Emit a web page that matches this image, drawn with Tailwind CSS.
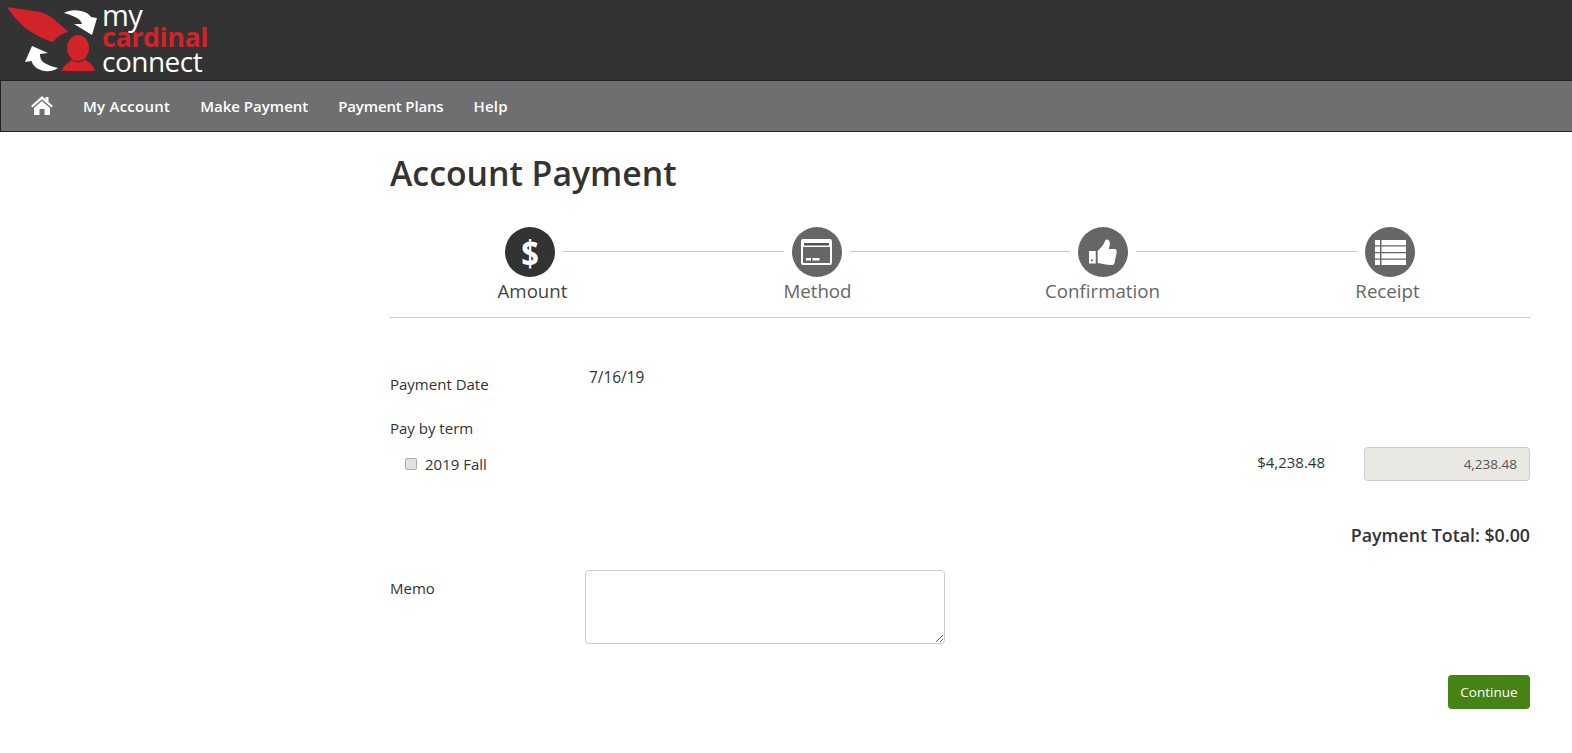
<!DOCTYPE html>
<html lang="en">
<head>
    <meta charset="UTF-8">
    <title>Account Payment</title>
    <script src="https://cdn.jsdelivr.net/npm/@tailwindcss/browser@4"></script>
</head>
<body class="bg-white text-[#333] font-['Open_Sans',sans-serif] text-[15px]">
    <!-- Logo bar -->
    <header class="h-[80px] bg-[#333] flex items-start">
        <svg class="w-[102px] h-[80px] shrink-0" viewBox="0 0 102 80">
            <path d="M7 7 L40 12 C47 14 53 18 57 22 C61 25 65 29 68 32 C61 34 56 38 53 42 C46 40 39 37 33 33 C27 30 23 26 20 23 C15 18 11 13 7 7Z" fill="#d2232a"/>
            <ellipse cx="78" cy="48" rx="11" ry="13" fill="#d2232a"/>
            <path d="M62 71 C63 66 68 63 72 59.500 C76 63 81 63 85 59.500 C90 63 94 66 95 71Z" fill="#d2232a"/>
            <path d="M64 13 C69 10 75 9.500 81 11 C86 12 89 14 91 17 L97 18 L92 35 L74 24 L82 24 C81 21 79 19 77 18 C73 16 69 14 64 13Z" fill="#fff"/>
            <path d="M58 68 C53 71.500 47 72 42 70.500 C37 69 33 66 31.500 61 L25 62 L32 46 L48 53 L40 54 C40 58 41 60 43 62 C47 65 53 67 58 68Z" fill="#fff"/>
        </svg>
        <div class="flex flex-col pt-[5px] text-[#fff]">
            <span class="text-[29px] leading-[20px] h-[20px] tracking-[-0.5px]">my</span>
            <span class="text-[27px] leading-[24px] h-[24px] font-bold tracking-[-0.5px] text-[#d2232a]">cardinal</span>
            <span class="text-[28px] leading-[24px] tracking-[-0.5px]">connect</span>
        </div>
    </header>

    <!-- Nav -->
    <nav class="h-[52px] bg-[#6f6f71] border border-r-0 border-[#222] flex items-center text-white font-semibold text-[15px] pl-[30px]">
        <svg class="w-[22px] h-[19px] mr-[30px] mb-[2px]" viewBox="0 0 22 19" fill="#fff">
            <path d="M11 0 L14.500 3.200 V1 H17.500 V6 L22 10 L20.500 11.600 L11 3.200 L1.500 11.600 L0 10Z"/>
            <path d="M11 5 L19 12 V19 H13.500 V13 H8.500 V19 H3 V12Z"/>
        </svg>
        <a class="mr-[30px] tracking-[0.25px]">My Account</a>
        <a class="mr-[30px]">Make Payment</a>
        <a class="mr-[30px] tracking-[-0.15px]">Payment Plans</a>
        <a class="tracking-[0.2px]">Help</a>
    </nav>

    <main class="ml-[390px] w-[1140px]">
        <h1 class="text-[33.800px] leading-[44px] font-semibold mt-[19px]">Account Payment</h1>

        <!-- Stepper -->
        <div class="flex items-center h-[50px] mt-[32px] px-[115px]">
            <div class="w-[50px] h-[50px] rounded-full bg-[#333] flex items-center justify-center text-white font-bold text-[35px] leading-none shrink-0">
                <span class="scale-x-[0.88]">$</span>
            </div>
            <div class="flex-1 h-px bg-[#c8c8c8] mx-[8px] mb-[1px]"></div>
            <div class="w-[50px] h-[50px] rounded-full bg-[#666] flex items-center justify-center shrink-0">
                <svg class="w-[31px] h-[26px]" viewBox="0 0 31 26" fill="none">
                    <rect x="1" y="1" width="29" height="24" rx="1" stroke="#fff" stroke-width="2"/>
                    <rect x="2" y="2" width="27" height="6" fill="#fff"/>
                    <rect x="3" y="4" width="25" height="2.500" fill="#555"/>
                    <rect x="5" y="19" width="5" height="2.500" fill="#fff"/>
                    <rect x="11.500" y="19" width="7" height="2.500" fill="#fff"/>
                </svg>
            </div>
            <div class="flex-1 h-px bg-[#c8c8c8] mx-[8px] mb-[1px]"></div>
            <div class="w-[50px] h-[50px] rounded-full bg-[#666] flex items-center justify-center shrink-0">
                <svg class="w-[28px] h-[27px]" viewBox="0 0 29 27" fill="#fff">
                    <path d="M0 12 H7 V25 H0Z M3 20.500 a1 1 0 1 0 .01 0Z" fill-rule="evenodd"/>
                    <path d="M9 12 C12 9 15 6 16 3 C16.500 1 17 0 18.500 0 C21 0 22 3 21.500 6 L20.500 10 H26.500 C28.500 10 29 12 28.500 14 L26.500 24 C26 26 24.500 26.500 23 26.500 C18 26.500 13 25 9 24.500Z"/>
                </svg>
            </div>
            <div class="flex-1 h-px bg-[#c8c8c8] mx-[8px] mb-[1px]"></div>
            <div class="w-[50px] h-[50px] rounded-full bg-[#666] flex items-center justify-center shrink-0">
                <svg class="w-[31px] h-[25px]" viewBox="0 0 31 25" fill="#fff">
                    <path d="M0 0 H5 V5.300 H0Z M6.500 0 H31 V5.300 H6.500Z M0 6.600 H5 V11.900 H0Z M6.500 6.600 H31 V11.900 H6.500Z M0 13.200 H5 V18.500 H0Z M6.500 13.200 H31 V18.500 H6.500Z M0 19.800 H5 V25 H0Z M6.500 19.800 H31 V25 H6.500Z"/>
                </svg>
            </div>
        </div>
        <div class="grid grid-cols-4 text-center text-[18.700px] leading-[28px] text-[#666]">
            <span class="text-[#444]">Amount</span>
            <span>Method</span>
            <span>Confirmation</span>
            <span>Receipt</span>
        </div>
        <div class="border-b border-[#ccc] mt-[12px]"></div>

        <!-- Form -->
        <div class="flex mt-[49px] h-[51px]">
            <div class="w-[199px] pt-[6px]">Payment Date</div>
            <div class="-mt-[1px] text-[15.400px]">7/16/19</div>
        </div>
        <div class="leading-[20px]">Pay by term</div>
        <div class="flex items-center h-[34px] mt-[9px]">
            <input type="checkbox" class="appearance-none ml-[15px] w-[12px] h-[12px] mr-[8px] mb-[1px] bg-[#e2e2e2] border border-[#aaa] rounded-[2px]">
            <span class="mt-[1px]">2019 Fall</span>
            <span class="ml-auto mb-[4px]">$4,238.48</span>
            <input disabled value="4,238.48" class="ml-[39px] w-[166px] h-[34px] bg-[#e9e8e3] border border-[#ccc] rounded-[4px] text-right pr-[12px] text-[13.500px] text-[#555]">
        </div>
        <div class="text-right text-[17.800px] font-semibold leading-[24px] mt-[42px]">Payment Total: $0.00</div>
        <div class="flex mt-[23px]">
            <label class="w-[195px] pt-[7px]">Memo</label>
            <textarea class="w-[360px] h-[74px] border border-[#ccc] rounded-[4px] bg-white"></textarea>
        </div>
        <div class="flex justify-end mt-[31px]">
            <button class="w-[82px] h-[34px] bg-[#458414] rounded-[4px] text-white text-[13.500px]">Continue</button>
        </div>
    </main>
</body>
</html>
